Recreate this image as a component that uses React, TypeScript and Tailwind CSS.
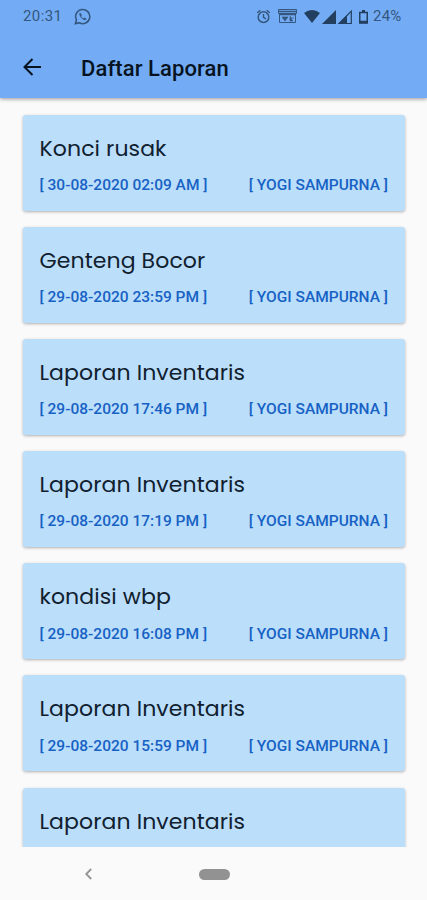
import React from "react";

type Report = { title: string; date?: string };

const reports: Report[] = [
  { title: "Konci rusak", date: "30-08-2020 02:09 AM" },
  { title: "Genteng Bocor", date: "29-08-2020 23:59 PM" },
  { title: "Laporan Inventaris", date: "29-08-2020 17:46 PM" },
  { title: "Laporan Inventaris", date: "29-08-2020 17:19 PM" },
  { title: "kondisi wbp", date: "29-08-2020 16:08 PM" },
  { title: "Laporan Inventaris", date: "29-08-2020 15:59 PM" },
  { title: "Laporan Inventaris" },
];

function StatusBar() {
  return (
    <div className="flex h-[33px] items-center pl-[23px] pr-[24px] text-[15px] text-[#34577f]">
      <span className="w-[39px] whitespace-nowrap leading-none tracking-[0.4px]">20:31</span>
      <svg className="ml-3 h-[17px] w-[17px]" viewBox="0 0 24 24" fill="none" stroke="currentColor" strokeWidth="2.200">
        <path d="M2 22l1.500-5.200A10 10 0 1 1 7.400 20.800z" />
        <path d="M8.500 6.500c-2 1.500-1 4.700 1.800 7.500s6 4 7.500 1.500l-3-2-1.500 1.300c-1.500-.8-2.700-2-3.300-3.300l1.200-1.500z" fill="currentColor" stroke="none" />
      </svg>
      <div className="ml-auto flex items-center">
        <svg className="h-[15px] w-[15px]" viewBox="0 0 24 24" fill="none" stroke="currentColor" strokeWidth="2.300">
          <circle cx="12" cy="13" r="8.500" />
          <path d="M12 8v5.500l4 2.300M2 6l5-4M22 6l-5-4" />
        </svg>
        <svg className="ml-[7px] h-[15px] w-[19px]" viewBox="0 0 19 15" fill="none" stroke="currentColor">
          <path d="M.5 .5h18v4H.5zM1.500 5v8.500h16V5" />
          <path d="M1 2.500h17M1 5.500h17" strokeWidth="1.500" />
          <path d="M4 8h6l-3 4zM12 7v5h3M13 9h3" fill="currentColor" strokeWidth=".7" />
        </svg>
        <svg className="ml-[7px] h-[13px] w-[16px]" viewBox="0 0 16 13" fill="#233f60">
          <path d="M0 3Q8-3 16 3L8 13z" />
        </svg>
        <svg className="ml-[2px] h-[14px] w-[14px]" viewBox="0 0 14 14" fill="#233f60">
          <path d="M14 0v14H0z" />
        </svg>
        <svg className="ml-[2px] h-[14px] w-[14px]" viewBox="0 0 14 14" fill="none" stroke="#233f60">
          <path d="M13.300 1.200v12.300H1.200z" strokeWidth="1.200" />
          <path d="M9 5v9H0z" fill="#233f60" stroke="none" />
        </svg>
        <svg className="ml-[7px] h-[14px] w-[9px]" viewBox="0 0 9 14" fill="none" stroke="#233f60" strokeWidth="1.500">
          <path d="M.75 2.500h7.500v10.500H.75z" />
          <path d="M3 1h3" strokeWidth="2" />
          <path d="M1 12h7" strokeWidth="2.500" />
        </svg>
        <span className="ml-[5px] w-[30px] whitespace-nowrap leading-none tracking-[0.2px]">24%</span>
      </div>
    </div>
  );
}

function ReportCard({ title, date }: Report) {
  return (
    <article className="mb-[16.600px] h-[95.500px] shrink-0 rounded-[3px] bg-[#bbdefb] pl-[17px] pr-[16.500px] pt-5 shadow-[0_1px_3px_rgba(0,0,0,0.3)]">
      <h2 className="whitespace-nowrap font-['Poppins','Inter',sans-serif] text-[22px] font-normal leading-[28px] tracking-[0.1px] text-[#10202e]">
        {title}
      </h2>
      {date && (
        <div className="mt-[13.200px] flex justify-between whitespace-nowrap text-[15.500px] font-medium leading-[18px] text-[#1762c4]">
          <span>[ {date} ]</span>
          <span>[ YOGI SAMPURNA ]</span>
        </div>
      )}
    </article>
  );
}

export default function App() {
  return (
    <div className="flex h-[900px] w-[427px] flex-col overflow-hidden bg-[#fafafa] font-['Roboto',sans-serif]">
      <header className="z-10 h-[98px] shrink-0 bg-[#73acf5] shadow-[0_1px_4px_rgba(0,0,0,0.4)]">
        <StatusBar />
        <div className="flex h-[68px] items-center pl-[23px] text-[#07131f]">
          <svg className="h-[18px] w-[18px]" viewBox="0 0 18 18" fill="none" stroke="currentColor" strokeWidth="2">
            <path d="M18 9H1.500M9.500 1L1.500 9l8 8" />
          </svg>
          <h1 className="ml-10 mt-[3px] whitespace-nowrap text-[22px] font-medium leading-none tracking-[0.1px]">Daftar Laporan</h1>
        </div>
      </header>
      <main className="flex h-[749px] shrink-0 flex-col overflow-hidden px-[22.500px] pt-[17px]">
        {reports.map((report, index) => (
          <ReportCard key={index} {...report} />
        ))}
      </main>
      <nav className="flex h-[53px] shrink-0 items-center pl-[85px]">
        <svg className="h-[12px] w-[7px]" viewBox="0 0 7 12" fill="none" stroke="#939393" strokeWidth="1.800">
          <path d="M6.200 1L1.200 6l5 5" />
        </svg>
        <span className="ml-[107px] mt-px h-[11px] w-[31px] rounded-full bg-[#929292]" />
      </nav>
    </div>
  );
}
